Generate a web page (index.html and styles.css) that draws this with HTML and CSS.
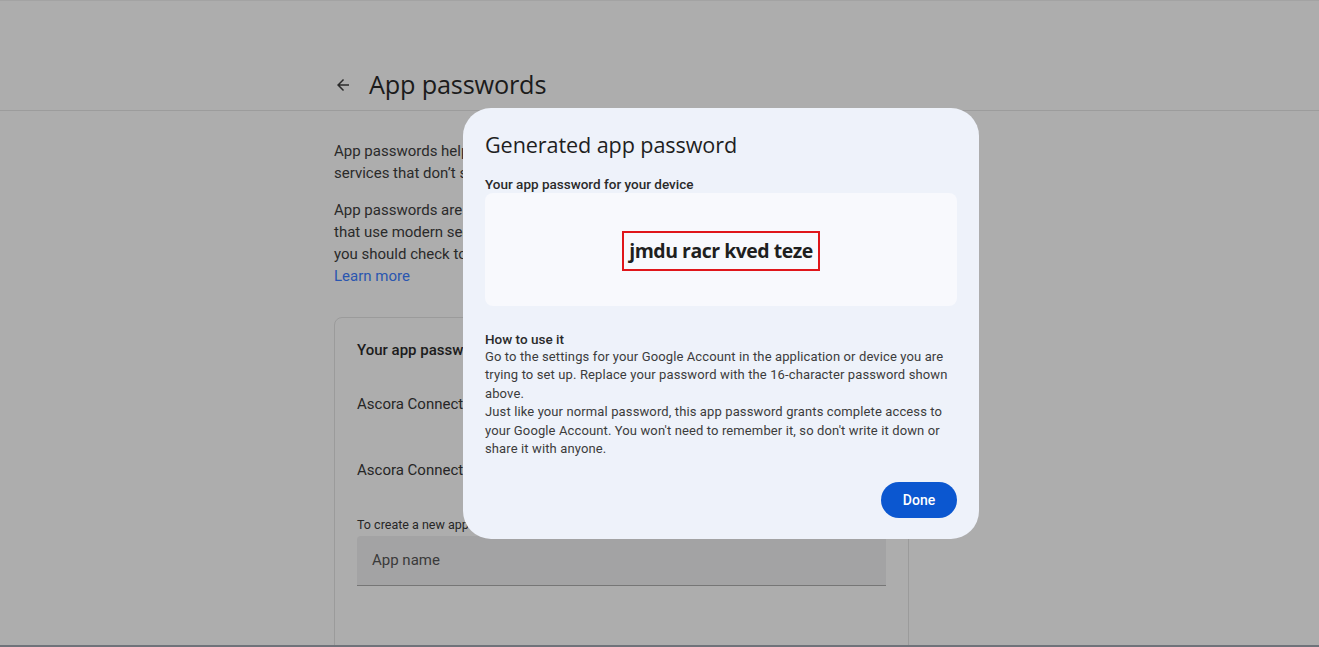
FILE: index.html
```html
<!DOCTYPE html>
<html lang="en">
<head>
<meta charset="utf-8">
<title>App passwords</title>
<link rel="stylesheet" href="styles.css">
</head>
<body>
<div class="page">
  <header class="header">
    <div class="header-row">
      <svg class="back" width="18" height="18" viewBox="0 0 24 24"><path d="M20 11H7.83l5.59-5.59L12 4l-8 8 8 8 1.41-1.41L7.83 13H20v-2z" fill="#2b2b2b"/></svg>
      <h1 class="title">App passwords</h1>
    </div>
  </header>
  <main class="content">
    <p class="para">App passwords help you sign in to your Google Account on older apps and<br>services that don’t support modern security standards.</p>
    <p class="para">App passwords are less secure than using up-to-date apps and services<br>that use modern security standards. Before you create an app password,<br>you should check to see if your app needs this in order to sign in.<br><a class="link" href="#">Learn more</a></p>
    <section class="card">
      <div class="card-title">Your app passwords</div>
      <div class="card-item">Ascora Connect</div>
      <div class="card-item">Ascora Connect</div>
      <div class="create-label">To create a new app specific password, type a name for it below...</div>
      <div class="input">App name</div>
    </section>
  </main>
  <div class="bottom-bar"></div>
</div>

<div class="dialog">
  <h2 class="dialog-title">Generated app password</h2>
  <div class="label">Your app password for your device</div>
  <div class="pw-box"><span class="pw">jmdu racr kved teze</span></div>
  <div class="label how">How to use it</div>
  <p class="help">Go to the settings for your Google Account in the application or device you are trying to set up. Replace your password with the 16-character password shown above.<br>Just like your normal password, this app password grants complete access to your Google Account. You won't need to remember it, so don't write it down or share it with anyone.</p>
  <div class="actions"><button class="done">Done</button></div>
</div>
</body>
</html>
```
FILE: styles.css
```css
* { box-sizing: border-box; }
html, body { margin: 0; padding: 0; }
body {
  width: 1319px;
  height: 647px;
  overflow: hidden;
  background: #adadad;
  font-family: Roboto, "Noto Sans", sans-serif;
  position: relative;
}
.page {
  height: 647px;
  border-top: 1px solid #a3a3a3;
  display: flex;
  flex-direction: column;
  overflow: hidden;
  position: relative;
}
.header {
  height: 110px;
  border-bottom: 1px solid #9c9c9c;
  flex: none;
  padding-left: 334px;
  padding-top: 66px;
}
.header-row {
  display: flex;
  align-items: center;
  gap: 17px;
}
.back { flex: none; margin-top: 1px; }
.title {
  margin: 0;
  font-family: "Open Sans", Roboto, sans-serif;
  font-weight: 400;
  font-size: 25.3px;
  color: #1b1b1b;
  line-height: 34px;
  letter-spacing: -0.2px;
}
.content {
  margin-left: 334px;
  width: 575px;
  padding-top: 29px;
  flex: 1;
}
.para {
  margin: 0 0 15px;
  font-size: 15px;
  line-height: 22px;
  color: #2a2a2a;
  white-space: nowrap;
}
.link { color: #2a56b0; text-decoration: none; }
.card {
  margin-top: 30px;
  border: 1px solid #9b9b9b;
  border-radius: 8px;
  padding: 21px 22px 0;
  height: 340px;
}
.card-title {
  font-size: 15px;
  font-weight: 500;
  color: #1c1c1c;
  line-height: 22px;
}
.card-item {
  font-size: 15px;
  color: #262626;
  line-height: 22px;
  margin-top: 32px;
}
.card-item + .card-item { margin-top: 44px; }
.create-label {
  margin-top: 36px;
  font-size: 12.5px;
  color: #262626;
  line-height: 16px;
  white-space: nowrap;
}
.input {
  margin-top: 3px;
  height: 50px;
  background: #a3a3a4;
  border-bottom: 1px solid #767676;
  border-radius: 4px 4px 0 0;
  padding: 15px 15px;
  font-size: 15px;
  color: #3a3a3a;
}
.bottom-bar {
  position: absolute;
  left: 0;
  right: 0;
  bottom: 0;
  height: 2px;
  background: #6f737a;
}

.dialog {
  position: absolute;
  left: 463px;
  top: 108px;
  width: 516px;
  height: 431px;
  background: #eef2fa;
  border-radius: 28px;
  padding: 22px 22px 0 22px;
  display: flex;
  flex-direction: column;
}
.dialog-title {
  margin: 0;
  font-family: "Open Sans", Roboto, sans-serif;
  font-weight: 400;
  font-size: 21.6px;
  line-height: 30px;
  color: #1f1f1f;
  letter-spacing: -0.1px;
}
.label {
  margin-top: 15px;
  font-size: 13.5px;
  font-weight: 500;
  color: #2a2a2a;
  line-height: 18px;
}
.pw-box {
  margin-top: 0;
  height: 113px;
  background: #f8f9fd;
  border-radius: 8px;
  display: flex;
  align-items: center;
  justify-content: center;
}
.pw {
  border: 2px solid #e0161b;
  padding: 3px 5px 4px;
  font-family: "Open Sans", Roboto, sans-serif;
  font-size: 19.5px;
  font-weight: 700;
  letter-spacing: -0.5px;
  color: #1f1f1f;
  line-height: 29px;
  margin-top: 2px;
}
.how { margin-top: 24px; }
.help {
  margin: 0;
  font-size: 13px;
  line-height: 18.4px;
  color: #3c3c3c;
  letter-spacing: 0.12px;
}
.actions {
  margin-top: 24px;
  display: flex;
  justify-content: flex-end;
}
.done {
  width: 76px;
  height: 36px;
  border: none;
  border-radius: 18px;
  background: #0b57d0;
  color: #fff;
  font-family: Roboto, sans-serif;
  font-size: 14px;
  font-weight: 500;
}
```
